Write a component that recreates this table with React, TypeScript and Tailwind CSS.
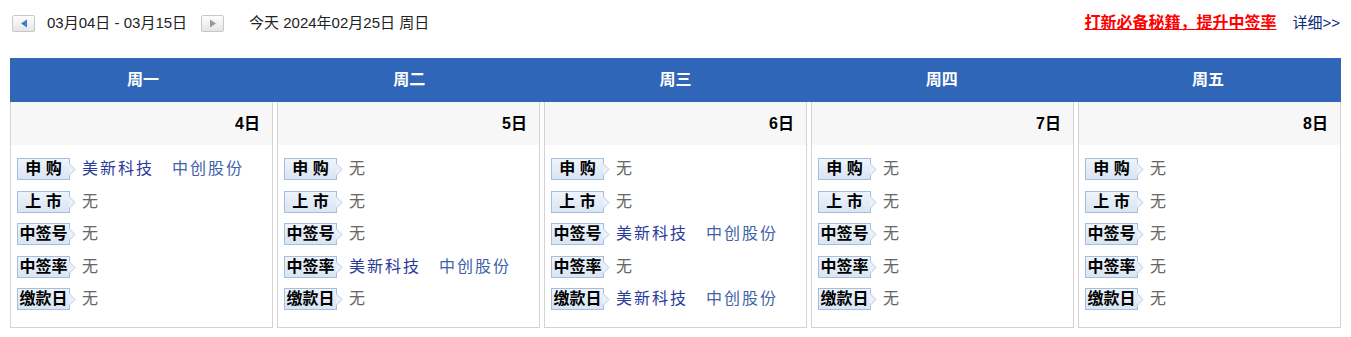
import React from "react";

type Entry = { label: string; items: string[] };
type Day = { week: string; date: string; entries: Entry[] };

const LABELS = ["申 购", "上 市", "中签号", "中签率", "缴款日"];
const STOCKS = ["美新科技", "中创股份"];

const mk = (has: number[]): Entry[] =>
  LABELS.map((label, i) => ({ label, items: has.includes(i) ? STOCKS : [] }));

const days: Day[] = [
  { week: "周一", date: "4日", entries: mk([0]) },
  { week: "周二", date: "5日", entries: mk([3]) },
  { week: "周三", date: "6日", entries: mk([2, 4]) },
  { week: "周四", date: "7日", entries: mk([]) },
  { week: "周五", date: "8日", entries: mk([]) },
];

function ArrowButton({ dir }: { dir: "left" | "right" }) {
  return (
    <span className="inline-flex h-[17px] w-[23px] items-center justify-center rounded-[2px] border border-[#c8c8c8] bg-gradient-to-b from-[#fdfdfd] to-[#e6e6e6]">
      <svg width="8" height="9" viewBox="0 0 8 9">
        {dir === "left" ? (
          <path d="M7 0.5 L7 8.5 L1 4.5 Z" fill="#3b7dd0" />
        ) : (
          <path d="M1 0.5 L1 8.5 L7 4.5 Z" fill="#9a9a9a" />
        )}
      </svg>
    </span>
  );
}

function Badge({ label }: { label: string }) {
  return (
    <span className="relative inline-flex h-[22px] w-[53px] shrink-0 items-center justify-center border border-[#a3bedf] bg-gradient-to-b from-[#eef4fb] to-[#d9e5f3] text-[16px] leading-[20px] font-bold text-black">
      {label}
      <svg className="absolute right-[-7px] top-[4px]" width="7" height="13" viewBox="0 0 7 13">
        <path d="M0 0.5 L6 6.5 L0 12.5" fill="#eaf1f9" stroke="#b7cbe4" strokeWidth="1" />
      </svg>
    </span>
  );
}

export default function App() {
  return (
    <div className="w-[1351px] h-[337px] bg-white font-['Liberation_Sans','Noto_Sans_CJK_SC',sans-serif] text-[15px] text-[#222]">
      <div className="flex h-[45px] items-center px-[12px] pt-[1px]">
        <ArrowButton dir="left" />
        <span className="ml-[12px]">03月04日 - 03月15日</span>
        <span className="ml-[14px]"><ArrowButton dir="right" /></span>
        <span className="ml-[25px]">今天 2024年02月25日 周日</span>
        <div className="ml-auto flex items-center">
          <a className="text-[16px] font-bold text-[#ff0000] underline">打新必备秘籍，提升中签率</a>
          <a className="ml-[16px] mr-[-1px] text-[#0b2a7a]">详细&gt;&gt;</a>
        </div>
      </div>
      <div className="mx-[10px] mt-[13px] w-[1331px]">
        <div className="grid h-[44px] grid-cols-5 bg-[#3066b8] text-[16px] font-bold text-white">
          {days.map((d) => (
            <div key={d.week} className="flex items-center justify-center">{d.week}</div>
          ))}
        </div>
        <div className="grid grid-cols-5 gap-[4px]">
          {days.map((d) => (
            <div key={d.date} className="h-[226px] border border-t-0 border-[#d3d3d3]">
              <div className="flex h-[43px] items-center justify-end bg-[#f7f7f7] pr-[12px] text-[16px] font-bold text-black">
                {d.date}
              </div>
              <div className="flex flex-col gap-[10.5px] pl-[6px] pt-[13px]">
                {d.entries.map((e) => (
                  <div key={e.label} className="flex h-[22px] items-center">
                    <Badge label={e.label} />
                    <div className="ml-[12px] flex gap-[18px] text-[16px] leading-[22px] tracking-[2px]">
                      {e.items.length === 0 ? (
                        <span className="text-[#666]">无</span>
                      ) : (
                        <>
                          <span className="text-[#2b3a9a]">{e.items[0]}</span>
                          <span className="text-[#3f63a8]">{e.items[1]}</span>
                        </>
                      )}
                    </div>
                  </div>
                ))}
              </div>
            </div>
          ))}
        </div>
      </div>
    </div>
  );
}
